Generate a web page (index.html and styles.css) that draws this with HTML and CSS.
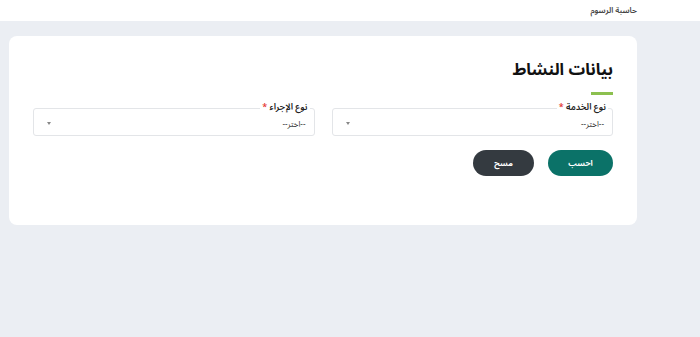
FILE: index.html
```html
<!DOCTYPE html>
<html lang="ar" dir="rtl">
<head>
<meta charset="utf-8">
<link rel="stylesheet" href="styles.css">
</head>
<body>
<header class="topbar"><span class="crumb">حاسبة الرسوم</span></header>
<main class="page">
  <section class="card">
    <h1 class="title">بيانات النشاط</h1>
    <div class="bar"></div>
    <div class="fields">
      <div class="field">
        <label class="label">نوع الخدمة <span class="req">*</span></label>
        <div class="select"><span class="value">--اختر--</span><span class="arrow"></span></div>
      </div>
      <div class="field">
        <label class="label">نوع الإجراء <span class="req">*</span></label>
        <div class="select"><span class="value">--اختر--</span><span class="arrow"></span></div>
      </div>
    </div>
    <div class="actions">
      <button class="btn btn-primary">احسب</button>
      <button class="btn btn-dark">مسح</button>
    </div>
  </section>
</main>
</body>
</html>
```
FILE: styles.css
```css
* { box-sizing: border-box; }
html, body { margin: 0; padding: 0; }
body {
  background: #ebeef3;
  font-family: "Noto Sans Arabic", "Noto Kufi Arabic", "Noto Sans", "DejaVu Sans", sans-serif;
  color: #212529;
  width: 700px;
  height: 337px;
  overflow: hidden;
}
.topbar {
  background: #fff;
  height: 21px;
  padding-right: 63px;
  display: flex;
  align-items: center;
}
.crumb {
  font-size: 8px;
  font-weight: 600;
  color: #444;
}
.page {
  padding: 15px 63px 0 9px;
}
.card {
  background: #fff;
  border-radius: 8px;
  height: 189px;
  padding: 20px 24px 0 24px;
}
.title {
  margin: 0;
  font-size: 16.5px;
  font-weight: 700;
  line-height: 28px;
  color: #111;
}
.bar {
  width: 22px;
  height: 3px;
  background: #8cc04f;
  margin-top: 8px;
}
.fields {
  display: grid;
  grid-template-columns: 1fr 1fr;
  column-gap: 17px;
  margin-top: 13px;
}
.field {
  position: relative;
}
.label {
  position: absolute;
  top: -5px;
  right: 5px;
  background: #fff;
  padding: 0 2px;
  font-size: 9px;
  font-weight: 600;
  line-height: 10px;
  color: #222;
}
.req { color: #e53935; }
.select {
  height: 28px;
  border: 1px solid #e3e5e8;
  border-radius: 3px;
  display: flex;
  align-items: center;
  justify-content: space-between;
  padding: 5px 8px 0 13px;
}
.value {
  font-size: 8px;
  line-height: 10px;
  color: #333;
}
.arrow {
  width: 0;
  height: 0;
  border-left: 2.5px solid transparent;
  border-right: 2.5px solid transparent;
  border-top: 3px solid #888;
  margin-top: -3px;
}
.actions {
  display: flex;
  gap: 14px;
  margin-top: 14px;
}
.btn {
  height: 26px;
  border: none;
  border-radius: 13px;
  color: #fff;
  font-family: inherit;
  font-size: 8px;
  font-weight: 700;
  padding: 0;
}
.btn-primary { background: #0b7268; width: 65px; }
.btn-dark { background: #343a40; width: 61px; }
```
